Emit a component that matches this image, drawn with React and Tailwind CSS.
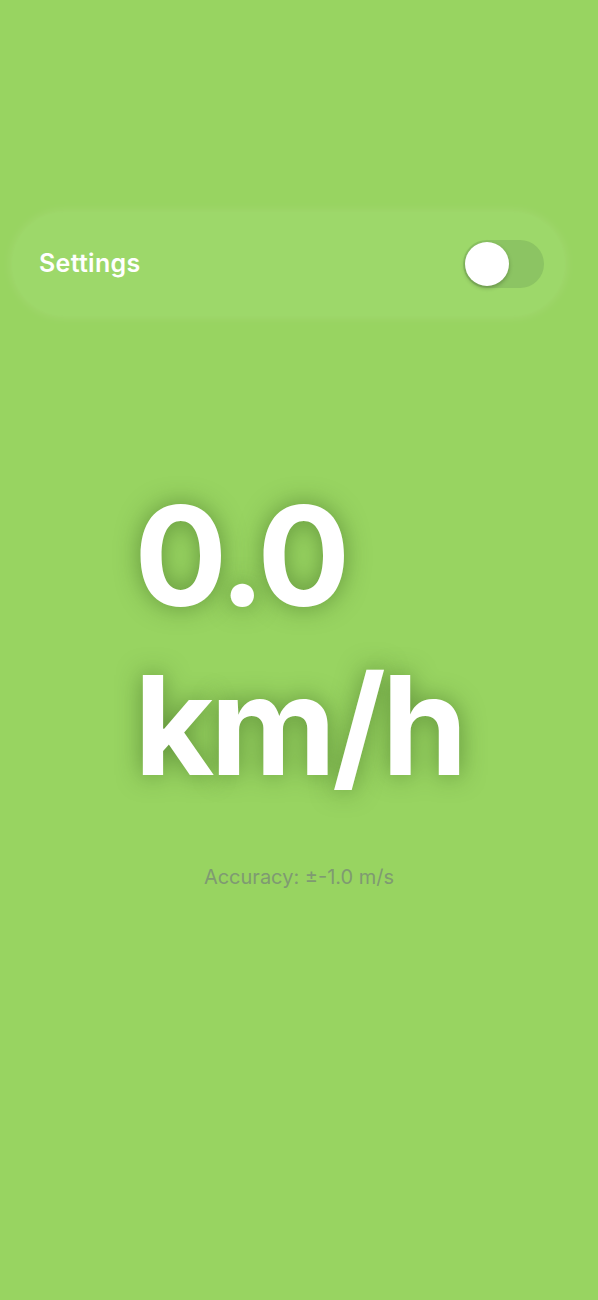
import { useState } from "react";

export default function App() {
    const [enabled, setEnabled] = useState(false);

    return (
        <div className="min-h-[1300px] w-full bg-[#98d461] flex flex-col items-center" style={{ fontFamily: "Inter, 'Noto Sans', sans-serif" }}>
            {/* settings bar */}
            <div className="mt-[212px] self-start ml-[12px] w-[553px] h-[104px] rounded-full bg-[#9dd86a] flex items-center justify-between pl-[27px] pr-[21px] shadow-[0_0_12px_rgba(255,255,255,0.12)]">
                <span className="text-[25px] font-semibold text-white tracking-[0.3px]">Settings</span>
                <button
                    type="button"
                    onClick={() => setEnabled(!enabled)}
                    className="relative w-[81px] h-[48px] rounded-full bg-[#8cc463]"
                >
                    <span className={"absolute top-[2px] w-[44px] h-[44px] rounded-full bg-white shadow-[0_2px_4px_rgba(0,0,0,0.25)] " + (enabled ? "left-[35px]" : "left-[2px]")}></span>
                </button>
            </div>

            {/* speed */}
            <div className="mt-[155px] flex flex-col items-start text-white font-bold text-[138px] leading-[169px] tracking-[-4px] [text-shadow:0_0_24px_rgba(40,80,20,0.5)]">
                <span>0.0</span>
                <span>km/h</span>
            </div>

            <p className="mt-[53px] text-[20px] text-[#7f9a72]">Accuracy: ±-1.0 m/s</p>
        </div>
    );
}
